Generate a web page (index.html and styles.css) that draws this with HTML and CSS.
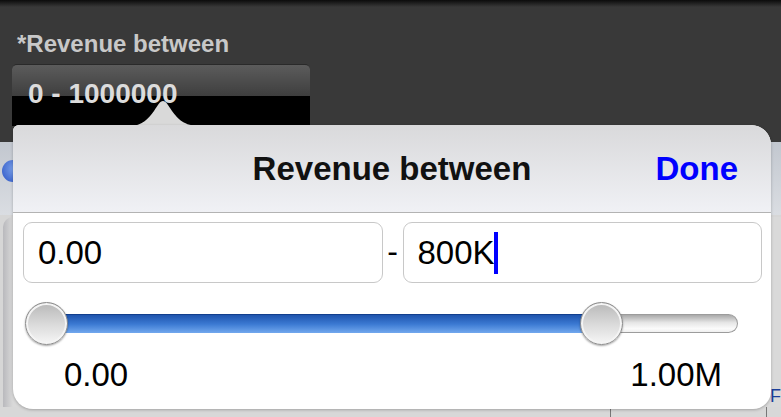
FILE: index.html
```html
<!DOCTYPE html>
<html lang="en">
<head>
    <meta charset="UTF-8">
    <title>Revenue between</title>
    <link rel="stylesheet" href="styles.css">
</head>
<body>
    <div class="topbar">
        <div class="label">*Revenue between</div>
        <div class="field">0 - 1000000</div>
    </div>

    <div class="page">
        <div class="band"><span class="dot"></span></div>
        <div class="panel"></div>
        <div class="foot">
            <span class="cell"></span>
            <span class="cell last"></span>
            <span class="link">F</span>
        </div>
    </div>

    <!-- popover over the page -->
    <svg class="arrow" width="70" height="28" viewBox="0 0 70 28">
        <path d="M0 27 C12 27 18 20 24 12 C28 6 30 2 33 2 C36 2 38 6 42 12 C48 20 54 27 70 27 Z" fill="#d9d9d9"/>
    </svg>
    <div class="popover">
        <div class="pop-head">
            <span></span>
            <span class="pop-title">Revenue between</span>
            <span class="done">Done</span>
        </div>
        <div class="pop-body">
            <div class="range">
                <div class="box">0.00</div>
                <div class="dash">-</div>
                <div class="box">800K<span class="caret"></span></div>
            </div>
            <div class="slider">
                <div class="track">
                    <div class="fill"></div>
                    <div class="rest"></div>
                </div>
                <span class="thumb" style="left: -5px"></span>
                <span class="thumb" style="left: 550px"></span>
            </div>
            <div class="ends">
                <span>0.00</span>
                <span>1.00M</span>
            </div>
        </div>
    </div>
</body>
</html>
```

FILE: styles.css
```css
*{
    margin: 0;
    padding: 0;
    box-sizing: border-box;
}
body{
    width: 781px;
    height: 417px;
    overflow: hidden;
    background: #393939;
    font-family: "Liberation Sans", Arial, sans-serif;
    display: flex;
    flex-direction: column;
    position: relative;
}
.topbar{
    height: 142px;
    flex: none;
    padding: 30px 0 0 12px;
    background: linear-gradient(#0b0b0b 0, #393939 7px, #393939 100%);
}
.label{
    margin-left: 5px;
    font-size: 24px;
    line-height: 28px;
    font-weight: bold;
    color: #c8c8c8;
}
.field{
    margin-top: 6px;
    width: 298px;
    height: 62px;
    padding: 15px 0 0 16px;
    border-radius: 5px 5px 0 0;
    border-top: 1px solid #2a2a2a;
    background: linear-gradient(#5c5c5c 0, #3e3e3e 31px, #000 31px, #000 100%);
    color: #dcdcdc;
    font-size: 28px;
    line-height: 28px;
    font-weight: bold;
}
.page{
    flex: 1;
    display: flex;
    flex-direction: column;
    background: #d6d6d6;
}
.band{
    height: 73px;
    background: linear-gradient(#c2c7cf, #dadde2);
    position: relative;
}
.dot{
    position: absolute;
    left: 2px;
    top: 18px;
    width: 22px;
    height: 22px;
    border-radius: 50%;
    background: radial-gradient(circle at 60% 40%, #7fa6ec, #2a52c4);
}
.panel{
    flex: 1;
    margin: 2px 0 0 3px;
    border-radius: 10px 0 0 0;
    background: linear-gradient(90deg, #b9b9bd, #d9d9d9 10px);
}
.foot{
    height: 10px;
    display: flex;
    background: #d8d8d8;
}
.cell{
    margin-left: 610px;
    width: 1px;
    background: #777;
}
.cell.last{
    margin-left: 155px;
}
.link{
    margin: -20px 0 0 4px;
    color: #1b3f9a;
    font-size: 18px;
    line-height: 18px;
}
.arrow{
    position: absolute;
    left: 130px;
    top: 99px;
}
.popover{
    position: absolute;
    left: 13px;
    top: 125px;
    width: 758px;
    height: 284px;
    border-radius: 6px 20px 18px 20px;
    background: #fff;
    overflow: hidden;
    box-shadow: 0 1px 3px rgba(0, 0, 0, 0.25);
}
.pop-head{
    height: 88px;
    display: grid;
    grid-template-columns: 1fr auto 1fr;
    align-items: center;
    border-bottom: 1px solid #b3b3b3;
    background: linear-gradient(#d9d9db, #f0f1f5);
}
.pop-title{
    font-size: 33px;
    line-height: 38px;
    font-weight: bold;
    color: #111;
}
.done{
    justify-self: end;
    padding-right: 33px;
    font-size: 33px;
    line-height: 38px;
    font-weight: bold;
    color: #0000ff;
}
.pop-body{
    padding: 9px 9px 0 10px;
}
.range{
    display: grid;
    grid-template-columns: 1fr 20px 1fr;
    height: 61px;
}
.box{
    display: flex;
    align-items: center;
    padding-left: 14px;
    border: 1px solid #c8c8c8;
    border-radius: 9px;
    font-size: 33px;
    color: #000;
}
.caret{
    width: 4px;
    height: 42px;
    margin-left: -1px;
    background: #0000ff;
}
.dash{
    text-align: center;
    font-size: 32px;
    line-height: 59px;
}
.slider{
    position: relative;
    margin: 19px 0 0 7px;
    width: 708px;
    height: 43px;
    padding-top: 12px;
}
.track{
    display: flex;
    height: 19px;
}
.fill{
    width: 571px;
    border-radius: 10px 0 0 10px;
    border-top: 1px solid #123f8d;
    background: linear-gradient(#1f54ad, #3b79d2 50%, #72a8ee);
}
.rest{
    flex: 1;
    border-radius: 0 10px 10px 0;
    border: 1px solid #9c9c9c;
    border-left: none;
    background: linear-gradient(#a9a9a9, #e6e6e6 45%, #fbfbfb 80%, #efefef);
}
.thumb{
    position: absolute;
    top: 0;
    width: 43px;
    height: 43px;
    border-radius: 50%;
    border: 1px solid #8d8d8d;
    background: linear-gradient(#b8b8b8, #dcdcdc 55%, #f6f6f6);
    box-shadow: inset 0 0 0 2px #f4f4f4, 0 1px 2px rgba(0, 0, 0, 0.35);
}
.ends{
    display: flex;
    justify-content: space-between;
    margin-top: 12px;
    padding: 0 40px 0 41px;
    font-size: 33px;
    line-height: 36px;
    color: #000;
}
```
